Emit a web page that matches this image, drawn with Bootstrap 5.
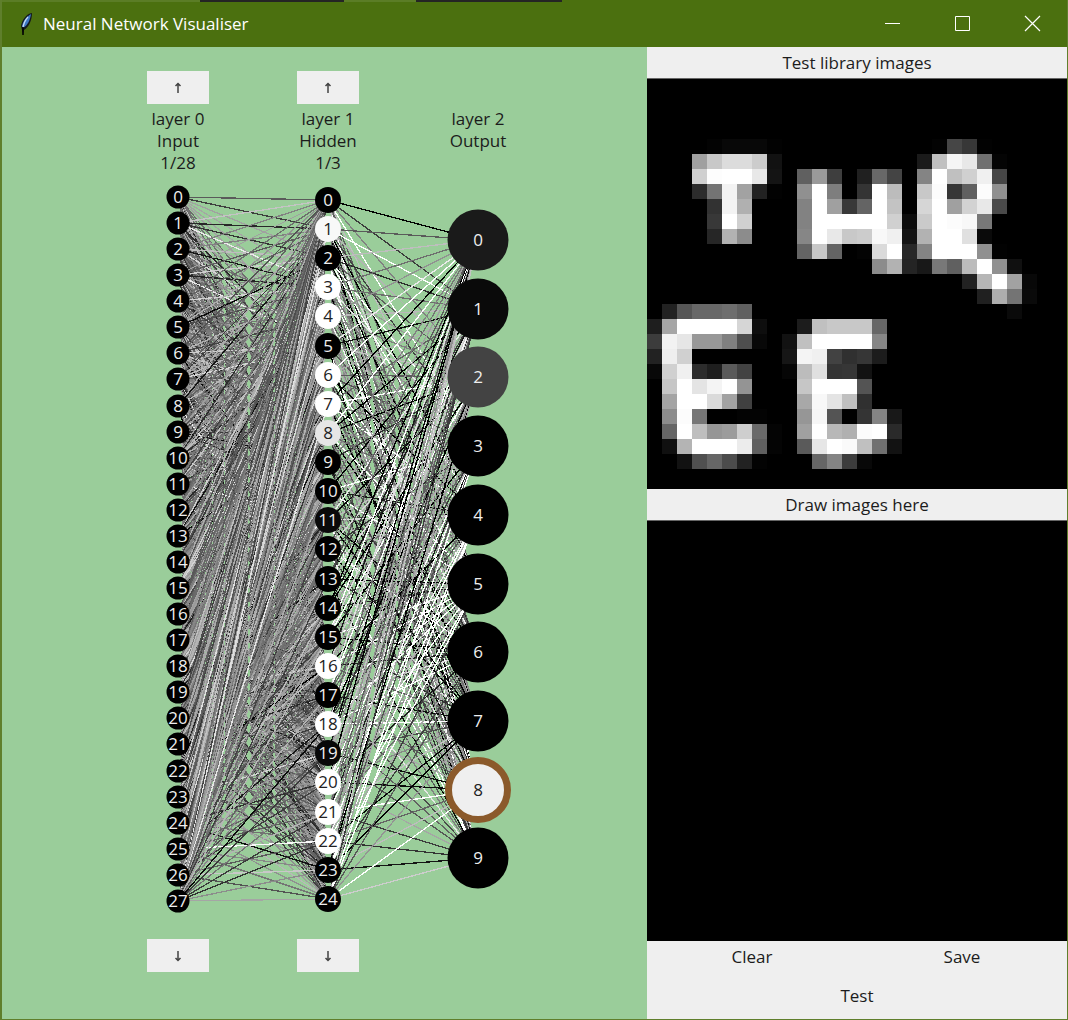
<!DOCTYPE html>
<html lang="en">
<head>
<meta charset="utf-8">
<meta name="viewport" content="width=device-width, initial-scale=1">
<title>Neural Network Visualiser</title>
<link href="https://cdn.jsdelivr.net/npm/bootstrap@5.3.0/dist/css/bootstrap.min.css" rel="stylesheet">
<style>
  body { font-family: "Open Sans", "Noto Sans", sans-serif; font-size: 17px; line-height: 22px; color: #1c1c1c; background: #9acd9a; }
  .app-window { border: solid #5f7f2c; border-width: 0 1px 1px 2px; background: #9acd9a; }
  .title-bar { height: 47px; background: #4b700f; color: #fff; font-size: 17px; position: relative; }
  .title-bar::before { content: ""; position: absolute; inset: 0 0 auto 0; height: 2px;
    background: linear-gradient(90deg, #5b7d26 198px, #242424 198px 342px, #5b7d26 342px 414px, #242424 414px 560px, #4b700f 560px); }
  .feather { width: 18px; height: 26px; margin-left: 15px; }
  .win-btn { width: 70px; height: 47px; border: 0; border-radius: 0; padding: 0; background: transparent; color: #fff; }
  .win-btn svg { width: 17px; height: 17px; display: block; margin: auto; }
  .net-panel { padding: 24px 0 0 101px; }
  .layer-col { width: 150px; }
  .tool-btn { background: #efefef; border: 0; border-radius: 0; color: #1c1c1c; font: inherit; }
  .arrow-btn { width: 62px; height: 33px; line-height: 1; display: block; margin: 0 auto; }
  .arrow-btn svg { width: 8px; height: 12px; display: block; margin: auto; }
  .layer-label { line-height: 22px; height: 66px; margin-top: 4px; }
  .net-svg { width: 450px; height: 765px; display: block; }
  .net-svg line { shape-rendering: crispEdges; }
  .net-svg text { font-size: 17px; text-anchor: middle; font-family: "Open Sans", sans-serif; }
  .side-panel { width: 420px; background: #efefef; }
  .pane-title { height: 32px; font-size: 17px; line-height: 32px; margin: 0; font-weight: 400; text-align: center; border-bottom: 1px solid #666; }
  .digit-view { display: block; width: 100%; height: 410px; background: #000; }
  .draw-view { display: block; width: 100%; height: 420px; background: #000; }
  .side-actions .tool-btn { height: 32px; padding: 0; }
  .side-actions .test-btn { height: 46px; }
</style>
</head>
<body>
<div class="app-window d-flex flex-column min-vh-100">
  <header class="title-bar d-flex align-items-center">
    <svg class="feather" viewBox="0 0 18 26" aria-hidden="true">
      <path d="M15 2C9 3 5 9 4 15l1 4 1 5 1-5c5-3 8-10 8-17z" fill="#14191d"/>
      <path d="M14 3C9 6 6 10 5 15l1 2c5-3 7-8 8-14z" fill="#3f78c4"/>
      <path d="M11 6C8 9 7 12 6 16" stroke="#c5dcf4" stroke-width="1.3" fill="none"/>
      <path d="M6 16v8" stroke="#000" stroke-width="1.5"/>
    </svg>
    <span class="flex-grow-1 ps-2">Neural Network Visualiser</span>
    <button class="win-btn" type="button" aria-label="Minimise"><svg viewBox="0 0 17 17"><path d="M1 8.500h15" stroke="#fff"/></svg></button>
    <button class="win-btn" type="button" aria-label="Maximise"><svg viewBox="0 0 17 17"><path d="M1.500 1.500h14v14h-14z" stroke="#fff" fill="none"/></svg></button>
    <button class="win-btn" type="button" aria-label="Close"><svg viewBox="0 0 17 17"><path d="M1 1l15 15M16 1L1 16" stroke="#fff" stroke-width="1.200"/></svg></button>
  </header>
  <div class="d-flex flex-grow-1">
    <main class="net-panel flex-grow-1">
      <div class="d-flex">
        <div class="layer-col text-center">
          <button class="tool-btn arrow-btn" type="button" aria-label="Scroll layer 0 up"><svg viewBox="0 0 8 12"><path d="M4 1v10M1.500 4L4 1.500 6.500 4" stroke="#444" stroke-width="1.500" fill="none"/></svg></button>
          <div class="layer-label">layer 0<br>Input<br>1/28</div>
        </div>
        <div class="layer-col text-center">
          <button class="tool-btn arrow-btn" type="button" aria-label="Scroll layer 1 up"><svg viewBox="0 0 8 12"><path d="M4 1v10M1.500 4L4 1.500 6.500 4" stroke="#444" stroke-width="1.500" fill="none"/></svg></button>
          <div class="layer-label">layer 1<br>Hidden<br>1/3</div>
        </div>
        <div class="layer-col text-center d-flex flex-column justify-content-end">
          <div class="layer-label">layer 2<br>Output</div>
        </div>
      </div>
      <svg class="net-svg" id="net" viewBox="0 0 450 765" role="img" aria-label="Network graph"></svg>
      <div class="d-flex">
        <div class="layer-col text-center"><button class="tool-btn arrow-btn" type="button" aria-label="Scroll layer 0 down"><svg viewBox="0 0 8 12"><path d="M4 1v10M1.500 8L4 10.500 6.500 8" stroke="#444" stroke-width="1.500" fill="none"/></svg></button></div>
        <div class="layer-col text-center"><button class="tool-btn arrow-btn" type="button" aria-label="Scroll layer 1 down"><svg viewBox="0 0 8 12"><path d="M4 1v10M1.500 8L4 10.500 6.500 8" stroke="#444" stroke-width="1.500" fill="none"/></svg></button></div>
      </div>
    </main>
    <aside class="side-panel flex-shrink-0">
      <h2 class="pane-title">Test library images</h2>
      <svg class="digit-view" id="digit" viewBox="0 0 420 410" shape-rendering="crispEdges" role="img" aria-label="Library image"></svg>
      <h2 class="pane-title">Draw images here</h2>
      <svg class="draw-view" viewBox="0 0 420 420" role="img" aria-label="Drawing area"></svg>
      <div class="side-actions">
        <div class="d-flex">
          <button class="tool-btn w-50" type="button">Clear</button>
          <button class="tool-btn w-50" type="button">Save</button>
        </div>
        <button class="tool-btn test-btn w-100" type="button">Test</button>
      </div>
    </aside>
  </div>
</div>
<script src="https://cdn.jsdelivr.net/npm/bootstrap@5.3.0/dist/js/bootstrap.bundle.min.js"></script>
<script>
  const NS = 'http://www.w3.org/2000/svg';
  function add(parent, tag, attrs, text) {
    const el = document.createElementNS(NS, tag);
    for (const k in attrs) el.setAttribute(k, attrs[k]);
    if (text !== undefined) el.textContent = text;
    parent.appendChild(el);
  }
  const grey = v => { v = Math.max(0, Math.min(255, Math.round(v))); return `rgb(${v},${v},${v})`; };

  // Seeded generator: the same weights on every load
  let seed = 41;
  const rnd = () => (seed = (seed * 1664525 + 1013904223) % 4294967296) / 4294967296;
  const gauss = () => rnd() + rnd() + rnd() + rnd() - 2;

  const layers = [
    { x: 75, y: 23, step: 26.07, n: 28, r: 11.5, fill: {} },
    { x: 225, y: 26, step: 29.12, n: 25, r: 13,
      fill: { 1: 248, 3: 255, 4: 255, 6: 255, 7: 255, 8: 230, 11: 10, 16: 255, 18: 255, 19: 8, 20: 255, 21: 255, 22: 255 } },
    { x: 375, y: 66, step: 68.7, n: 10, r: 30.5, fill: { 0: 26, 1: 10, 2: 67, 8: 239 } }
  ];
  // Strong individual weights, "from-to": grey level
  const strong = [
    { '0-0': 90, '1-1': 40, '3-3': 35, '5-2': 10, '8-1': 20, '24-23': 15, '25-22': 250, '26-23': 200, '27-24': 165,
      '27-18': 10, '27-22': 50, '27-21': 60, '2-2': 190, '4-3': 210, '27-23': 140, '1-3': 235, '3-5': 235 },
    { '0-0': 0, '0-1': 60, '0-3': 255, '1-0': 90, '1-1': 255, '2-0': 190, '2-1': 45, '3-0': 110, '3-1': 110, '4-1': 185, '5-1': 15,
      '6-2': 90, '7-2': 255, '8-2': 0, '18-7': 255, '20-8': 10, '21-8': 255, '22-7': 5, '22-9': 50, '23-9': 20, '24-9': 205,
      '24-8': 255, '21-9': 60, '20-9': 165, '23-8': 190, '22-8': 100, '17-7': 10 }
  ];
  const net = document.getElementById('net');
  for (let l = 0; l < 2; l++) {
    const a = layers[l], b = layers[l + 1];
    for (let i = 0; i < a.n; i++) for (let j = 0; j < b.n; j++) {
      const g = gauss();
      const v = strong[l][i + '-' + j] ?? (l ? 138 + g * 180 : 122 + g * 75);
      add(net, 'line', { x1: a.x, y1: Math.round(a.y + i * a.step), x2: b.x, y2: Math.round(b.y + j * b.step), stroke: grey(v), 'stroke-width': 1.3 });
    }
  }
  layers.forEach((L, l) => {
    for (let i = 0; i < L.n; i++) {
      const y = Math.round(L.y + i * L.step), v = L.fill[i] || 0;
      const ring = l === 2 && i === 8;
      add(net, 'circle', ring ? { cx: L.x, cy: y, r: 29.5, fill: grey(v), stroke: '#8b5a2b', 'stroke-width': 7 } : { cx: L.x, cy: y, r: L.r, fill: grey(v) });
      add(net, 'text', { x: L.x, y: y + 6, fill: v > 128 ? '#222' : '#eee' }, i);
    }
  });

  // Sparse 28 x 28 image: [row, first column, hex bytes]
  const px = [
    [4, 4, '0308080802'], [4, 19, '03463702'],
    [5, 3, 'a0c8dcdccc12'], [5, 18, '1ac0f5e87004'],
    [6, 3, 'd0fdffffe814'], [6, 10, '609a3e00206844'], [6, 18, '84ffc0d0f046'],
    [7, 3, '2c74f3a22202'], [7, 10, '90ff7e0034ffbc'], [7, 18, 'c8fc3660fc90'],
    [8, 4, '32f3b0'], [8, 10, '82ffa03864ffc3'], [8, 18, 'd6ffa0d2e84a'],
    [9, 4, '38ffd0'], [9, 10, '82ffffffffffd00ccafffcf878'],
    [10, 4, '26b28c'], [10, 10, '86ffe8c8ccf8f014b2ffffe00a'],
    [11, 10, '64c8640003daff2884ffffff9002'],
    [12, 15, '8cb224187860bcff9010'], [13, 21, '22b6ffa208'], [14, 22, '20ae740a'],
    [15, 1, '225668686e60'], [15, 24, '0a'],
    [16, 0, '1ea6ffffffffd60e'], [16, 10, '1cc0c8c8c866'],
    [17, 0, '3cf2e69898804e08'], [17, 9, '12c0ffffffff86'],
    [18, 0, '22eed0'], [18, 9, '16f4f04230361c'],
    [19, 0, '08d0f02c1e5a42'], [19, 9, '06bce0343612'],
    [20, 1, 'c6ffe4f4ff94'], [20, 10, 'c6ffffff54'],
    [21, 1, 'a4ffffdaa240'], [21, 10, 'a8f8e4c030'],
    [22, 1, '8cfc7600000303'], [22, 10, '96f65400348418'],
    [23, 1, '66ffbe969cce6a04'], [23, 10, 'a0ffb8b0fcff2a'],
    [24, 1, '10b4ffffffec6004'], [24, 10, '5ae6fffac07012'],
    [25, 2, '1250664c2203'], [25, 11, '66843c08']
  ];
  const digit = document.getElementById('digit');
  for (const [r, c, s] of px)
    for (let k = 0; k < s.length / 2; k++)
      add(digit, 'rect', { x: (c + k) * 15, y: r * 15, width: 15, height: 15, fill: grey(parseInt(s.substr(k * 2, 2), 16)) });
</script>
</body>
</html>
